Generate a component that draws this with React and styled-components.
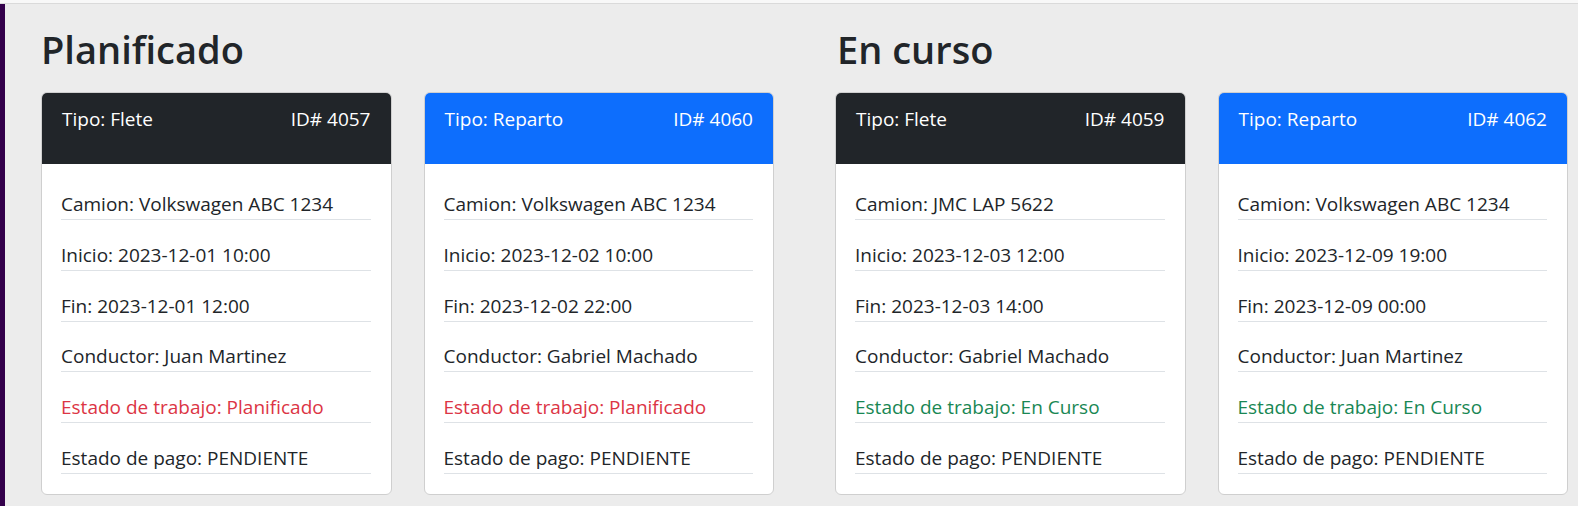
import React from "react";
import styled, { createGlobalStyle } from "styled-components";

const GlobalStyle = createGlobalStyle`
  html, body { margin: 0; padding: 0; }
  body {
    background: #f8f8f8;
    font-family: "Open Sans", "Noto Sans", "Liberation Sans", sans-serif;
    color: #212529;
  }
`;

const Page = styled.div`
  padding-top: 3px;
  background: #f8f8f8;
  width: 1578px;
  height: 506px;
  box-sizing: border-box;
  overflow: hidden;
`;

const Frame = styled.div`
  display: flex;
  height: 100%;
  border-top: 1px solid #dadada;
  background: #ececec;
`;

const SideBar = styled.div`
  width: 5px;
  flex: none;
  background: #33004b;
`;

const Main = styled.main`
  display: flex;
  gap: 61px;
  padding: 21px 0 0 36px;
`;

const Section = styled.section`
  width: 733px;
  display: flex;
  flex-direction: column;
`;

const Heading = styled.h1`
  margin: 0 0 19px ${(p) => p.$offset || 0}px;
  font-size: 38px;
  line-height: 48px;
  font-weight: 600;
  color: #212529;
`;

const CardRow = styled.div`
  display: flex;
  gap: 32px;
`;

const Card = styled.article`
  flex: 1;
  min-width: 0;
  height: 403px;
  box-sizing: border-box;
  background: #fff;
  border: 1px solid #cfcfcf;
  border-radius: 6px;
  overflow: hidden;
  display: flex;
  flex-direction: column;
`;

const CardHeader = styled.header`
  height: 72px;
  flex: none;
  box-sizing: border-box;
  margin: -1px -1px 0;
  padding: 13px 21px 0;
  display: flex;
  justify-content: space-between;
  align-items: flex-start;
  background: ${(p) => (p.$variant === "primary" ? "#0d6efd" : "#212529")};
  color: #fff;
  font-size: 19px;
  line-height: 28px;
`;

const CardBody = styled.div`
  display: flex;
  flex-direction: column;
  gap: 20.8px;
  padding: 26px 20px 0 19px;
`;

const Field = styled.div`
  border-bottom: 1px solid #dee2e6;
  font-size: 19px;
  line-height: 29px;
  white-space: nowrap;
  color: ${(p) =>
    p.$tone === "danger" ? "#dc3545" : p.$tone === "success" ? "#198754" : "#212529"};
`;

const columns = [
  {
    title: "Planificado",
    offset: 0,
    tone: "danger",
    jobs: [
      { tipo: "Flete", id: 4057, variant: "dark", camion: "Volkswagen ABC 1234", inicio: "2023-12-01 10:00", fin: "2023-12-01 12:00", conductor: "Juan Martinez", estado: "Planificado" },
      { tipo: "Reparto", id: 4060, variant: "primary", camion: "Volkswagen ABC 1234", inicio: "2023-12-02 10:00", fin: "2023-12-02 22:00", conductor: "Gabriel Machado", estado: "Planificado" },
    ],
  },
  {
    title: "En curso",
    offset: 2,
    tone: "success",
    jobs: [
      { tipo: "Flete", id: 4059, variant: "dark", camion: "JMC LAP 5622", inicio: "2023-12-03 12:00", fin: "2023-12-03 14:00", conductor: "Gabriel Machado", estado: "En Curso" },
      { tipo: "Reparto", id: 4062, variant: "primary", camion: "Volkswagen ABC 1234", inicio: "2023-12-09 19:00", fin: "2023-12-09 00:00", conductor: "Juan Martinez", estado: "En Curso" },
    ],
  },
];

function JobCard({ job, tone }) {
  return (
    <Card>
      <CardHeader $variant={job.variant}>
        <span>Tipo: {job.tipo}</span>
        <span>ID# {job.id}</span>
      </CardHeader>
      <CardBody>
        <Field>Camion: {job.camion}</Field>
        <Field>Inicio: {job.inicio}</Field>
        <Field>Fin: {job.fin}</Field>
        <Field>Conductor: {job.conductor}</Field>
        <Field $tone={tone}>Estado de trabajo: {job.estado}</Field>
        <Field>Estado de pago: PENDIENTE</Field>
      </CardBody>
    </Card>
  );
}

export default function App() {
  return (
    <Page>
      <GlobalStyle />
      <Frame>
        <SideBar />
        <Main>
          {columns.map((col) => (
            <Section key={col.title}>
              <Heading $offset={col.offset}>{col.title}</Heading>
              <CardRow>
                {col.jobs.map((job) => (
                  <JobCard key={job.id} job={job} tone={col.tone} />
                ))}
              </CardRow>
            </Section>
          ))}
        </Main>
      </Frame>
    </Page>
  );
}
